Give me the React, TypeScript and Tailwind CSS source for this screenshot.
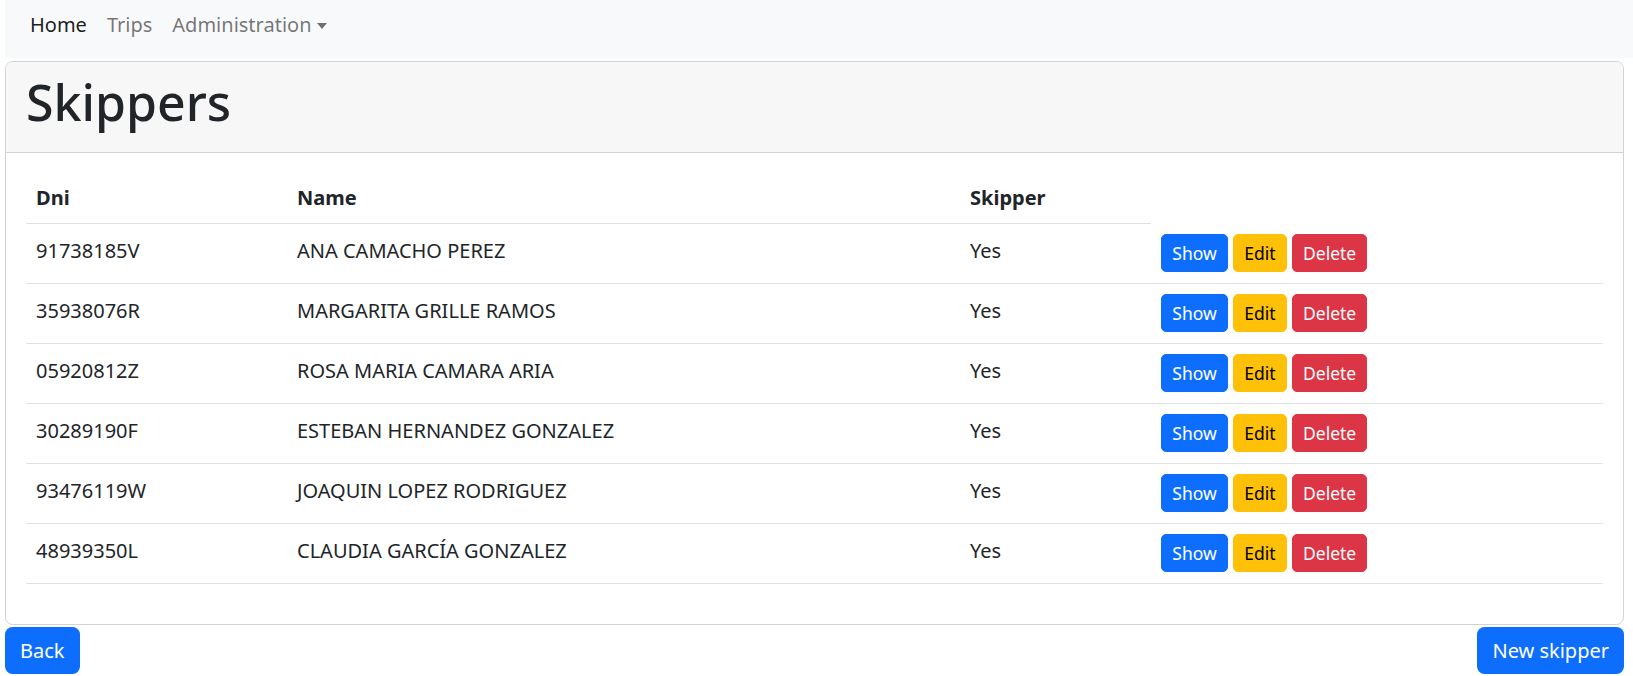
import type { JSX } from 'react'

type Skipper = {
  dni: string
  name: string
  skipper: string
}

const skippers: Skipper[] = [
  { dni: "91738185V", name: "ANA CAMACHO PEREZ", skipper: "Yes" },
  { dni: "35938076R", name: "MARGARITA GRILLE RAMOS", skipper: "Yes" },
  { dni: "05920812Z", name: "ROSA MARIA CAMARA ARIA", skipper: "Yes" },
  { dni: "30289190F", name: "ESTEBAN HERNANDEZ GONZALEZ", skipper: "Yes" },
  { dni: "93476119W", name: "JOAQUIN LOPEZ RODRIGUEZ", skipper: "Yes" },
  { dni: "48939350L", name: "CLAUDIA GARCÍA GONZALEZ", skipper: "Yes" },
]

const Navbar = () => {
  return (
    <nav className="ml-[5px] h-[58px] bg-[#f8f9fa] flex items-start pt-[10px] px-[15px]">
      <ul className="flex items-center text-[20px] leading-[30px]">
        <li><a className="block px-[10px] text-black/90">Home</a></li>
        <li><a className="block px-[10px] text-black/55">Trips</a></li>
        <li>
          <a className="flex items-center px-[10px] text-black/55">
            Administration
            <span className="ml-[5px] mt-[2px] border-x-[5px] border-t-[6px] border-x-transparent border-t-black/55" />
          </a>
        </li>
      </ul>
    </nav>
  )
}

const SmallButton = ({ label, className }: { label: string; className: string }): JSX.Element => (
  <button className={`h-[38px] px-[10px] rounded-[5px] text-[17.5px] leading-[26px] border ${className}`}>
    {label}
  </button>
)

const App = () => {
  return (
    <div className="min-h-screen bg-white text-[#212529] font-['Noto_Sans',sans-serif] text-[20px]">
      <Navbar />

      <div className="pl-[5px] pr-[9px]">
        <div className="mt-[3px] border border-[#d3d3d3] rounded-[7.5px] overflow-hidden">
          <div className="bg-[#f7f7f7] border-b border-[#d3d3d3] px-[20px] pt-[10px] pb-[20px]">
            <h1 className="text-[50px] leading-[60px] font-medium">Skippers</h1>
          </div>

          <div className="p-[20px]">
            <table className="w-full table-fixed border-collapse mb-[20px]">
              <colgroup>
                <col className="w-[261px]" />
                <col className="w-[673px]" />
                <col className="w-[191px]" />
                <col />
              </colgroup>
              <thead>
                <tr>
                  <th className="text-left font-bold px-[10px] py-[10px] leading-[30px] border-b border-[#dee2e6]">Dni</th>
                  <th className="text-left font-bold px-[10px] py-[10px] leading-[30px] border-b border-[#dee2e6]">Name</th>
                  <th className="text-left font-bold px-[10px] py-[10px] leading-[30px] border-b border-[#dee2e6]">Skipper</th>
                </tr>
              </thead>
              <tbody>
                {skippers.map((s) => (
                  <tr key={s.dni} className="border-b border-[#dee2e6]">
                    <td className="align-top h-[60px] px-[10px] pt-[12px] leading-[30px]">{s.dni}</td>
                    <td className="align-top h-[60px] px-[10px] pt-[12px] leading-[30px]">{s.name}</td>
                    <td className="align-top h-[60px] px-[10px] pt-[12px] leading-[30px]">{s.skipper}</td>
                    <td className="align-top h-[60px] px-[10px] pt-[10px]">
                      <div className="flex gap-[5px]">
                        <SmallButton label="Show" className="bg-[#0d6efd] border-[#0d6efd] text-white w-[67px]" />
                        <SmallButton label="Edit" className="bg-[#ffc107] border-[#ffc107] text-black w-[54px]" />
                        <SmallButton label="Delete" className="bg-[#dc3545] border-[#dc3545] text-white w-[75px]" />
                      </div>
                    </td>
                  </tr>
                ))}
              </tbody>
            </table>
          </div>
        </div>

        <div className="flex justify-between mt-[2px]">
          <button className="h-[47px] px-[15px] rounded-[7.5px] bg-[#0d6efd] text-white text-[20px] leading-[30px]">Back</button>
          <button className="h-[47px] px-[15px] rounded-[7.5px] bg-[#0d6efd] text-white text-[20px] leading-[30px]">New skipper</button>
        </div>
      </div>
    </div>
  )
}

export default App
